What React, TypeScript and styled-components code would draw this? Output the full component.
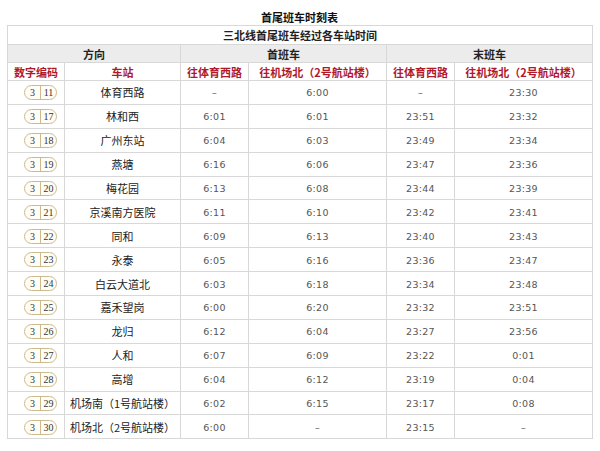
import React from 'react';
import styled, { createGlobalStyle } from 'styled-components';

const GlobalStyle = createGlobalStyle`
  html, body {
    margin: 0;
    padding: 0;
    background: #fff;
  }
  body {
    font-family: "Noto Sans CJK SC", "Noto Sans", sans-serif;
    color: #222;
  }
`;

const Page = styled.div`
  width: 600px;
  height: 451px;
  padding: 0 8px 0 7px;
  box-sizing: border-box;
`;

const Title = styled.div`
  height: 25px;
  line-height: 14px;
  padding-top: 10px;
  box-sizing: border-box;
  text-align: center;
  font-size: 11px;
  font-weight: bold;
  color: #111;
`;

const Table = styled.table`
  width: 585px;
  border-collapse: collapse;
  table-layout: fixed;
  border: 1px solid #d4d4d4;
`;

const Cell = styled.td<{ $h: number; $bg?: string; $red?: boolean; $bold?: boolean }>`
  height: ${(p) => p.$h}px;
  padding: 0;
  border: 1px solid #d8d8d8;
  background: ${(p) => p.$bg || '#fff'};
  text-align: center;
  vertical-align: middle;
  font-size: 11px;
  line-height: 12px;
  font-weight: ${(p) => (p.$bold ? 'bold' : 'normal')};
  color: ${(p) => (p.$red ? '#b0182c' : '#222')};
  white-space: nowrap;
  overflow: hidden;
`;

const Time = styled.span`
  font-family: "DejaVu Sans", sans-serif;
  font-size: 9.5px;
  color: #555;
  letter-spacing: 0.3px;
`;

const Station = styled.span`
  font-size: 11px;
  color: #222;
`;

const Badge = styled.span`
  display: inline-flex;
  align-items: stretch;
  height: 13px;
  border: 1.5px solid #cbbb8e;
  border-radius: 8px;
  font-family: "Liberation Serif", serif;
  font-size: 10px;
  line-height: 13px;
  color: #333;
  margin-left: 9px;
  vertical-align: middle;
  background: #fffdf6;
`;

const BadgePart = styled.span<{ $w: number; $divider?: boolean }>`
  width: ${(p) => p.$w}px;
  text-align: center;
  border-left: ${(p) => (p.$divider ? '1px solid #cbbb8e' : 'none')};
`;

type Row = [string, string, string, string, string, string];

const rows: Row[] = [
  ['11', '体育西路', '–', '6:00', '–', '23:30'],
  ['17', '林和西', '6:01', '6:01', '23:51', '23:32'],
  ['18', '广州东站', '6:04', '6:03', '23:49', '23:34'],
  ['19', '燕塘', '6:16', '6:06', '23:47', '23:36'],
  ['20', '梅花园', '6:13', '6:08', '23:44', '23:39'],
  ['21', '京溪南方医院', '6:11', '6:10', '23:42', '23:41'],
  ['22', '同和', '6:09', '6:13', '23:40', '23:43'],
  ['23', '永泰', '6:05', '6:16', '23:36', '23:47'],
  ['24', '白云大道北', '6:03', '6:18', '23:34', '23:48'],
  ['25', '嘉禾望岗', '6:00', '6:20', '23:32', '23:51'],
  ['26', '龙归', '6:12', '6:04', '23:27', '23:56'],
  ['27', '人和', '6:07', '6:09', '23:22', '0:01'],
  ['28', '高增', '6:04', '6:12', '23:19', '0:04'],
  ['29', '机场南（1号航站楼）', '6:02', '6:15', '23:17', '0:08'],
  ['30', '机场北（2号航站楼）', '6:00', '–', '23:15', '–'],
];

const widths = [57, 116, 68, 138, 68, 138];

export default function App() {
  return (
    <>
      <GlobalStyle />
      <Page>
        <Title>首尾班车时刻表</Title>
        <Table>
          <colgroup>
            {widths.map((w, i) => (
              <col key={i} style={{ width: w }} />
            ))}
          </colgroup>
          <tbody>
            <tr>
              <Cell $h={18} $bold colSpan={6}>
                三北线首尾班车经过各车站时间
              </Cell>
            </tr>
            <tr>
              <Cell $h={17} $bg="#ececec" $bold colSpan={2}>方向</Cell>
              <Cell $h={17} $bg="#ececec" $bold colSpan={2}>首班车</Cell>
              <Cell $h={17} $bg="#ececec" $bold colSpan={2}>末班车</Cell>
            </tr>
            <tr>
              <Cell $h={17} $red $bold>数字编码</Cell>
              <Cell $h={17} $red $bold>车站</Cell>
              <Cell $h={17} $red $bold>往体育西路</Cell>
              <Cell $h={17} $red $bold>往机场北（2号航站楼）</Cell>
              <Cell $h={17} $red $bold>往体育西路</Cell>
              <Cell $h={17} $red $bold>往机场北（2号航站楼）</Cell>
            </tr>
            {rows.map((r) => (
              <tr key={r[0]}>
                <Cell $h={22.9}>
                  <Badge>
                    <BadgePart $w={15}>3</BadgePart>
                    <BadgePart $w={15} $divider>{r[0]}</BadgePart>
                  </Badge>
                </Cell>
                <Cell $h={22.9}>
                  <Station>{r[1]}</Station>
                </Cell>
                {r.slice(2).map((t, i) => (
                  <Cell $h={22.9} key={i}>
                    <Time>{t}</Time>
                  </Cell>
                ))}
              </tr>
            ))}
          </tbody>
        </Table>
      </Page>
    </>
  );
}
